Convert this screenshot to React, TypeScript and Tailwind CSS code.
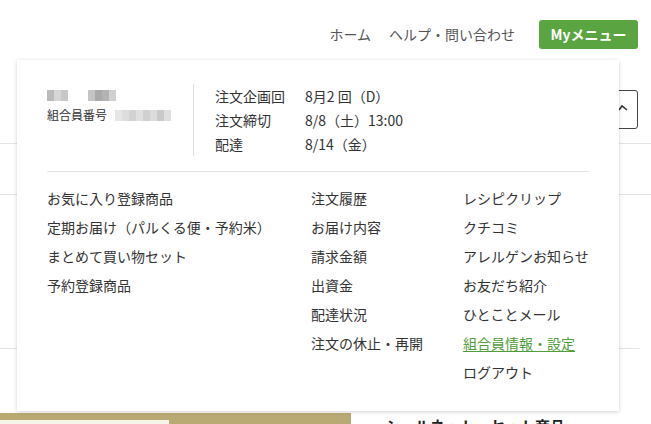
const font = { fontFamily: "'Noto Sans CJK JP', 'Noto Sans', sans-serif" };

const colA = ["お気に入り登録商品", "定期お届け（パルくる便・予約米）", "まとめて買い物セット", "予約登録商品"];
const colB = ["注文履歴", "お届け内容", "請求金額", "出資金", "配達状況", "注文の休止・再開"];
const colC = ["レシピクリップ", "クチコミ", "アレルゲンお知らせ", "お友だち紹介", "ひとことメール", "組合員情報・設定", "ログアウト"];

const info = [
  ["注文企画回", "8月2 回（D）"],
  ["注文締切", "8/8（土）13:00"],
  ["配達", "8/14（金）"],
];

// pixelated blur blocks standing in for masked personal data
function Mosaic({ cells }: { cells: string[] }) {
  return (
    <div className="flex">
      {cells.map((c, i) => (
        <span key={i} className="h-[11px] w-[7px]" style={{ background: c }} />
      ))}
    </div>
  );
}

function MenuCol({ items, className }: { items: string[]; className?: string }) {
  return (
    <ul className={className}>
      {items.map((t) => (
        <li key={t} className="h-[29px] leading-[29px]">
          {t === "組合員情報・設定" ? (
            <a className="text-[#4f9d3a] underline underline-offset-2">{t}</a>
          ) : (
            <a>{t}</a>
          )}
        </li>
      ))}
    </ul>
  );
}

export default function App() {
  return (
    <div className="relative h-[424px] w-[651px] overflow-hidden bg-white text-[#333]" style={font}>
      {/* header */}
      <header className="flex h-[60px] items-start justify-end pr-[13px] pt-[20px]">
        <nav className="flex h-[29px] items-center text-[14px] text-[#555]">
          <a className="mr-[18px]">ホーム</a>
          <a className="mr-[24px]">ヘルプ・問い合わせ</a>
        </nav>
        <button className="h-[29px] w-[99px] rounded-[3px] bg-[#5aa541] text-[14px] font-bold text-white">
          Myメニュー
        </button>
      </header>

      {/* page behind the menu */}
      <div className="flex h-[84px] items-center justify-end border-b border-[#e3e3e3] pr-[13px]">
        <div className="mt-[15px] flex h-[39px] w-[40px] items-center justify-end rounded-[3px] border border-[#444] pr-[9px] text-[12px]">
          <svg width="10" height="7" viewBox="0 0 10 7" className="-mt-[4px]">
            <path d="M1 6 L4 2 L9 6" fill="none" stroke="#333" strokeWidth="1.6" />
          </svg>
        </div>
      </div>
      <div className="h-[51px] border-b border-[#e3e3e3]" />
      <div className="mr-[12px] h-[154px] border-b border-[#e3e3e3]" />
      <div className="mt-[64px] flex items-start">
        <div className="h-[20px] w-[351px] bg-[#b9aa74] pt-[7px]">
          <div className="h-[13px] w-[169px] bg-[#f7f4ec]" />
        </div>
        <p className="ml-[34px] mt-[2px] text-[15px] font-bold text-[#222]">シールネット・セット商品</p>
      </div>

      {/* dropdown panel */}
      <div className="absolute left-[17px] top-[60px] h-[351px] w-[602px] bg-white px-[30px] pt-[24px] shadow-[0_1px_4px_rgba(0,0,0,0.18)]">
        <div className="flex">
          <div className="w-[147px] border-r border-[#ddd] pt-[6px]">
            <div className="flex gap-[20px]">
              <Mosaic cells={["#bbb", "#d6d6d6", "#c8c8c8"]} />
              <Mosaic cells={["#c4c4c4", "#a9a9a9", "#b3b3b3", "#d0d0d0"]} />
            </div>
            <div className="mt-[5px] flex items-center text-[12px] leading-[18px]">
              <span>組合員番号</span>
              <span className="ml-[8px] flex">
                <Mosaic cells={["#e6e6e6", "#ddd", "#d2d2d2", "#e0e0e0", "#d0d0d0", "#dcdcdc", "#c9c9c9", "#dfdfdf"]} />
              </span>
            </div>
            <div className="h-[19px]" />
          </div>
          <dl className="pl-[21px] text-[14px] leading-[24px]">
            {info.map(([k, v]) => (
              <div key={k} className="flex">
                <dt className="w-[90px]">{k}</dt>
                <dd>{v}</dd>
              </div>
            ))}
          </dl>
        </div>
        <div className="mt-[15px] border-t border-[#e3e3e3]" />
        <div className="flex pt-[12px] text-[14px]">
          <MenuCol items={colA} className="w-[264px]" />
          <MenuCol items={colB} className="w-[152px]" />
          <MenuCol items={colC} />
        </div>
      </div>
    </div>
  );
}
